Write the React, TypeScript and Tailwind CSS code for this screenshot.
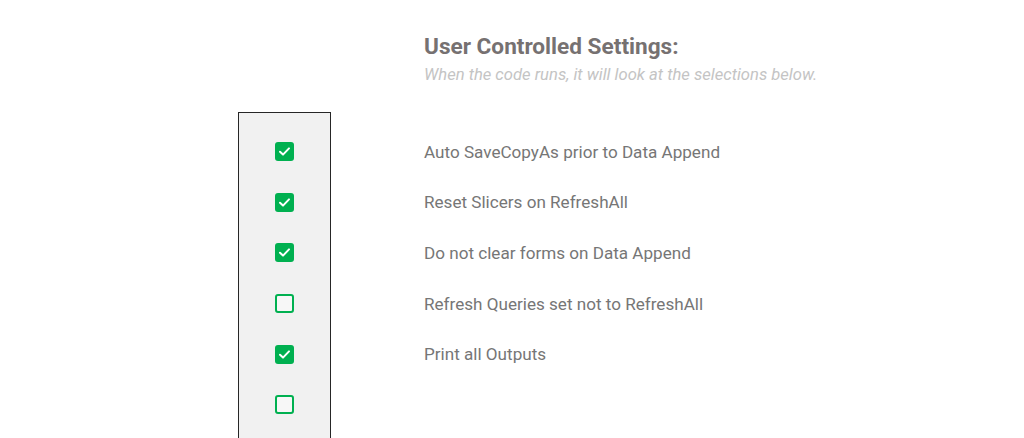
import React from "react";

const items: { label: string; checked: boolean }[] = [
  { label: "Auto SaveCopyAs prior to Data Append", checked: true },
  { label: "Reset Slicers on RefreshAll", checked: true },
  { label: "Do not clear forms on Data Append", checked: true },
  { label: "Refresh Queries set not to RefreshAll", checked: false },
  { label: "Print all Outputs", checked: true },
  { label: "", checked: false },
];

function Box({ checked }: { checked: boolean }) {
  if (checked) {
    return (
      <div className="w-[19px] h-[19px] rounded-[3px] bg-[#00b050] flex items-center justify-center">
        <svg width="15" height="15" viewBox="0 0 15 15" fill="none">
          <path d="M3 7.8 L6 10.6 L12 4.4" stroke="white" strokeWidth="2" strokeLinecap="round" strokeLinejoin="round" />
        </svg>
      </div>
    );
  }
  return <div className="w-[19px] h-[19px] rounded-[3px] border-2 border-[#00b050] bg-[#f7f7f7]" />;
}

export default function App() {
  return (
    <div className="w-full h-[438px] overflow-hidden bg-white" style={{ fontFamily: "Roboto, 'Liberation Sans', sans-serif" }}>
      <div className="pl-[424px] pt-[32px] h-[112px]">
        <div className="text-[22.6px] font-bold text-[#767171] leading-[29px]">User Controlled Settings:</div>
        <div className="text-[16.6px] italic text-[#c4c4c4] leading-[22px] mt-[3px]">When the code runs, it will look at the selections below.</div>
      </div>
      <div className="flex">
        <div className="ml-[238px] w-[93px] h-[340px] border border-[#262626] bg-[#f1f1f1] pt-[13px] flex flex-col">
          {items.map((it, i) => (
            <div key={i} className="h-[50.7px] flex items-center justify-center">
              <Box checked={it.checked} />
            </div>
          ))}
        </div>
        <div className="ml-[93px] pt-[15px] flex flex-col">
          {items.map((it, i) => (
            <div key={i} className="h-[50.7px] flex items-center text-[17.1px] text-[#767676]">
              {it.label}
            </div>
          ))}
        </div>
      </div>
    </div>
  );
}
